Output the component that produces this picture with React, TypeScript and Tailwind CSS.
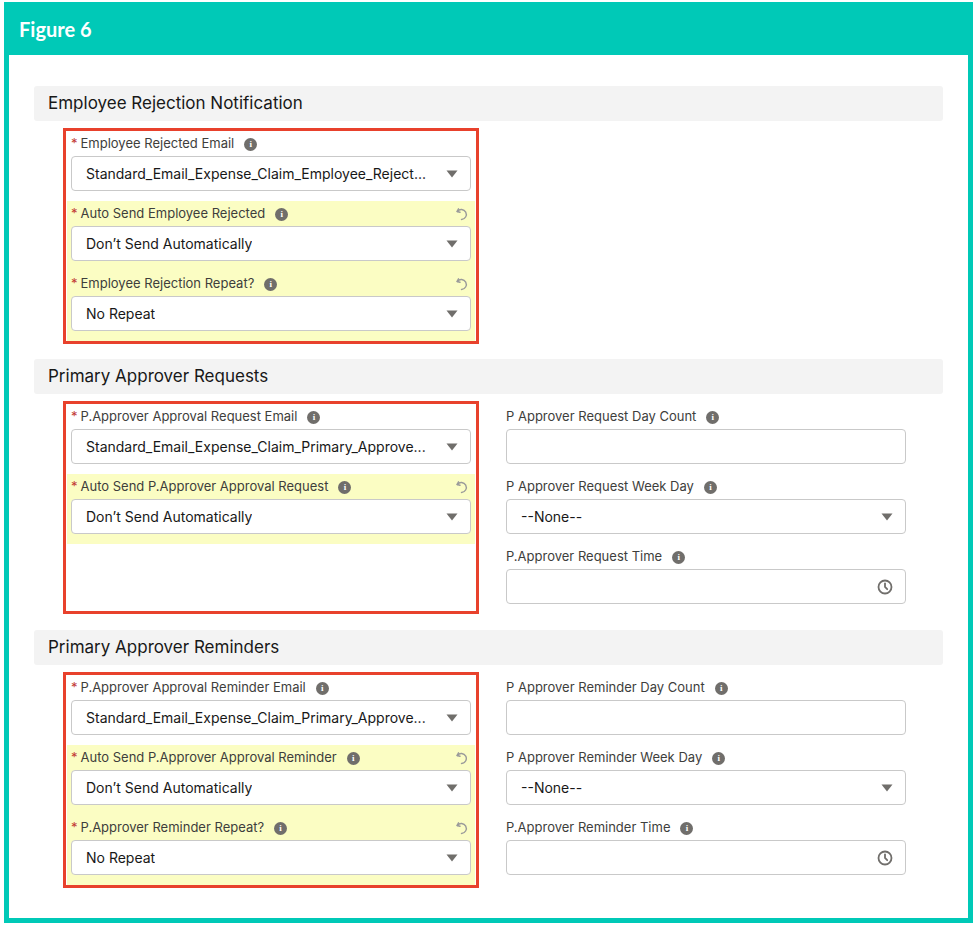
import React from "react";

const Info = () => (
  <span className="ml-[10px] inline-flex h-[13px] w-[13px] items-center justify-center rounded-full bg-[#706e6b] text-[9px] font-bold leading-none text-white" style={{ fontFamily: "Georgia, serif" }}>i</span>
);

const Undo = () => (
  <svg width="14" height="14" viewBox="0 0 14 14" className="ml-auto mr-[2px]" fill="none" stroke="#9a9a9a" strokeWidth="1.4" strokeLinecap="round" strokeLinejoin="round">
    <path d="M3.5 1.8 L2 4.5 L5 5.3" />
    <path d="M2.3 4.5 A5 5 0 1 1 6.5 12.5" />
  </svg>
);

const Caret = () => (
  <svg width="12" height="8" viewBox="0 0 12 8" className="ml-auto"><path d="M0.5 0.5 H11.5 L6 7.5 Z" fill="#706e6b" /></svg>
);

const Clock = () => (
  <svg width="16" height="16" viewBox="0 0 16 16" className="ml-auto" fill="none" stroke="#706e6b" strokeWidth="1.8" strokeLinecap="round">
    <circle cx="8" cy="8" r="6.5" />
    <path d="M8 4.3 V8 L10.2 10.2" />
  </svg>
);

type F = { label: string; req?: boolean; value?: string; kind: "select" | "text" | "time"; yellow?: boolean };

const Field = ({ f }: { f: F }) => (
  <div className={`h-[70px] px-[4px] pt-[2px] ${f.yellow ? "bg-[#fbfdc3]" : ""}`}>
    <div className="flex h-[22px] items-center text-[13px] text-[#3e3e3c]">
      {f.req && <span className="mr-[3px] text-[#c23934]">*</span>}
      <span>{f.label}</span>
      <Info />
      {f.yellow && <Undo />}
    </div>
    <div className="mt-[1px] flex h-[35px] items-center rounded-[4px] border border-[#c9c9c9] bg-white pl-[14px] pr-[12px] text-[14px] text-[#181818]">
      <span className="truncate">{f.value}</span>
      {f.kind === "select" && <Caret />}
      {f.kind === "time" && <Clock />}
    </div>
  </div>
);

const Section = ({ title, left, right }: { title: string; left: F[]; right?: F[] }) => (
  <div className="mb-[15px]">
    <div className="flex h-[35px] items-center rounded-[3px] bg-[#f3f3f3] pl-[14px] text-[17px] text-[#181818]">{title}</div>
    <div className="mt-[7px] flex pl-[29px]">
      <div className="w-[416px] border-[3px] border-[#e8412c] px-[1px]">
        {left.map((f, i) => <Field key={i} f={f} />)}
      </div>
      {right && (
        <div className="ml-[23px] w-[408px] pt-[3px]">
          {right.map((f, i) => <Field key={i} f={f} />)}
        </div>
      )}
    </div>
  </div>
);

export default function App() {
  return (
    <div className="h-[926px] w-[976px] bg-white pl-[4px] pt-[2px]" style={{ fontFamily: "Inter, 'Liberation Sans', sans-serif" }}>
      <div className="h-[921px] w-[969px] bg-[#00c9b7] px-[5px] pb-[5px]">
        <div className="flex h-[53px] items-center pl-[10px] text-[20px] font-bold text-white" style={{ fontFamily: "Lato, Inter, sans-serif" }}>Figure 6</div>
        <div className="h-[863px] bg-white px-[25px] pt-[31px]">
          <Section
            title="Employee Rejection Notification"
            left={[
              { label: "Employee Rejected Email", req: true, value: "Standard_Email_Expense_Claim_Employee_Reject...", kind: "select" },
              { label: "Auto Send Employee Rejected", req: true, value: "Don’t Send Automatically", kind: "select", yellow: true },
              { label: "Employee Rejection Repeat?", req: true, value: "No Repeat", kind: "select", yellow: true },
            ]}
          />
          <Section
            title="Primary Approver Requests"
            left={[
              { label: "P.Approver Approval Request Email", req: true, value: "Standard_Email_Expense_Claim_Primary_Approve...", kind: "select" },
              { label: "Auto Send P.Approver Approval Request", req: true, value: "Don’t Send Automatically", kind: "select", yellow: true },
            ]}
            right={[
              { label: "P Approver Request Day Count", kind: "text" },
              { label: "P Approver Request Week Day", value: "--None--", kind: "select" },
              { label: "P.Approver Request Time", kind: "time" },
            ]}
          />
          <div className="h-[1px]" />
          <Section
            title="Primary Approver Reminders"
            left={[
              { label: "P.Approver Approval Reminder Email", req: true, value: "Standard_Email_Expense_Claim_Primary_Approve...", kind: "select" },
              { label: "Auto Send P.Approver Approval Reminder", req: true, value: "Don’t Send Automatically", kind: "select", yellow: true },
              { label: "P.Approver Reminder Repeat?", req: true, value: "No Repeat", kind: "select", yellow: true },
            ]}
            right={[
              { label: "P Approver Reminder Day Count", kind: "text" },
              { label: "P Approver Reminder Week Day", value: "--None--", kind: "select" },
              { label: "P.Approver Reminder Time", kind: "time" },
            ]}
          />
        </div>
      </div>
    </div>
  );
}
